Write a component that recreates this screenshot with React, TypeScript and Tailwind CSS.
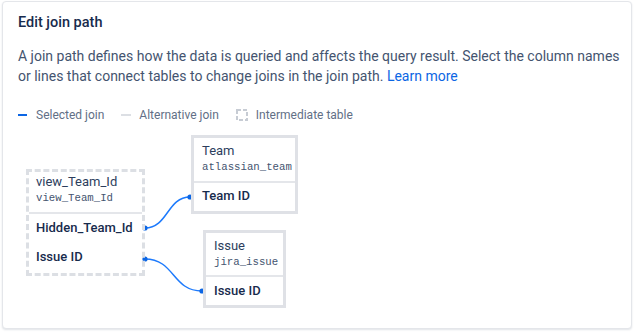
import React from "react";

const sans = { fontFamily: 'Roboto, "Noto Sans", sans-serif' };
const mono = { fontFamily: '"Liberation Mono", "DejaVu Sans Mono", monospace' };

function LegendDashed() {
  return (
    <svg width="12" height="12" viewBox="0 0 12 12" className="shrink-0">
      <rect x="1" y="1" width="10" height="10" fill="none" stroke="#C7CCD4" strokeWidth="2" strokeDasharray="4 2" />
    </svg>
  );
}

export default function App() {
  return (
    <div className="w-[634px] h-[332px] bg-white relative overflow-hidden" style={sans}>
      <div className="absolute left-[2px] top-[1px] w-[630px] h-[328px] rounded-[4px] border border-[#E4E6EA] shadow-[0_1px_2px_rgba(9,30,66,0.12)] bg-white">
        <div className="pl-[15px] pr-[10px] pt-[9px]">
          <h1 className="text-[14.5px] leading-[24px] font-medium text-[#172B4D]">Edit join path</h1>
          <p className="mt-[11px] text-[14px] leading-[20px] text-[#44546F]">
            A join path defines how the data is queried and affects the query result. Select the column names or lines that connect tables to change joins in the join path.{" "}
            <span className="text-[#0C66E4]">Learn more</span>
          </p>
          <div className="mt-[20px] flex items-center text-[12px] leading-[18px] text-[#626F86]">
            <span className="w-[9px] h-[2px] bg-[#0C66E4] mr-[9px]" />
            <span>Selected join</span>
            <span className="w-[10px] h-[2px] bg-[#DCDFE4] ml-[17px] mr-[8px]" />
            <span>Alternative join</span>
            <span className="ml-[17px] mr-[8px] flex"><LegendDashed /></span>
            <span>Intermediate table</span>
          </div>
        </div>

        {/* diagram canvas */}
        <svg className="absolute left-0 top-0" width="630" height="328" viewBox="0 0 630 328">
          <g transform="translate(-3,-2)" fill="none" stroke="#1D7AFC" strokeWidth="1.5">
            <path d="M145 228 C 168 228, 167 197, 190 197" />
            <path d="M145 259 C 175 259, 172 291, 202 291" />
          </g>
          <g transform="translate(-3,-2)" fill="#0C66E4">
            <circle cx="145" cy="228" r="2.6" />
            <circle cx="190" cy="197" r="2.6" />
            <circle cx="145" cy="259" r="2.6" />
            <circle cx="202" cy="291" r="2.6" />
          </g>
        </svg>

        {/* intermediate table */}
        <div className="absolute left-[23px] top-[167px] w-[119px] h-[107px] border-[3px] border-dashed border-[#DCDFE4] flex flex-col">
          <div className="pl-[7px] pt-[1px] h-[40px]">
            <div className="text-[13px] leading-[18px] text-[#2C3E5D]">view_Team_Id</div>
            <div className="text-[10.7px] leading-[15px] text-[#44546F]" style={mono}>view_Team_Id</div>
          </div>
          <div className="h-[2px] bg-[#E4E6EA]" />
          <div className="pl-[7px] pt-[5px] text-[13px] leading-[18px] font-medium text-[#172B4D]">Hidden_Team_Id</div>
          <div className="pl-[7px] pt-[11px] text-[13px] leading-[18px] font-medium text-[#172B4D]">Issue ID</div>
        </div>

        {/* Team table */}
        <div className="absolute left-[188px] top-[133px] w-[107px] h-[79px] border-[3px] border-[#DFE1E6] flex flex-col">
          <div className="pl-[8px] pt-[4px] h-[43px]">
            <div className="text-[13px] leading-[18px] text-[#2C3E5D]">Team</div>
            <div className="text-[10.7px] leading-[15px] text-[#44546F]" style={mono}>atlassian_team</div>
          </div>
          <div className="h-[2px] bg-[#E4E6EA]" />
          <div className="pl-[8px] pt-[4px] text-[13px] leading-[18px] font-medium text-[#172B4D]">Team ID</div>
        </div>

        {/* Issue table */}
        <div className="absolute left-[200px] top-[228px] w-[83px] h-[78px] border-[3px] border-[#DFE1E6] flex flex-col">
          <div className="pl-[8px] pt-[4px] h-[42px]">
            <div className="text-[13px] leading-[18px] text-[#2C3E5D]">Issue</div>
            <div className="text-[10.7px] leading-[15px] text-[#44546F]" style={mono}>jira_issue</div>
          </div>
          <div className="h-[2px] bg-[#E4E6EA]" />
          <div className="pl-[8px] pt-[5px] text-[13px] leading-[18px] font-medium text-[#172B4D]">Issue ID</div>
        </div>
      </div>
    </div>
  );
}
